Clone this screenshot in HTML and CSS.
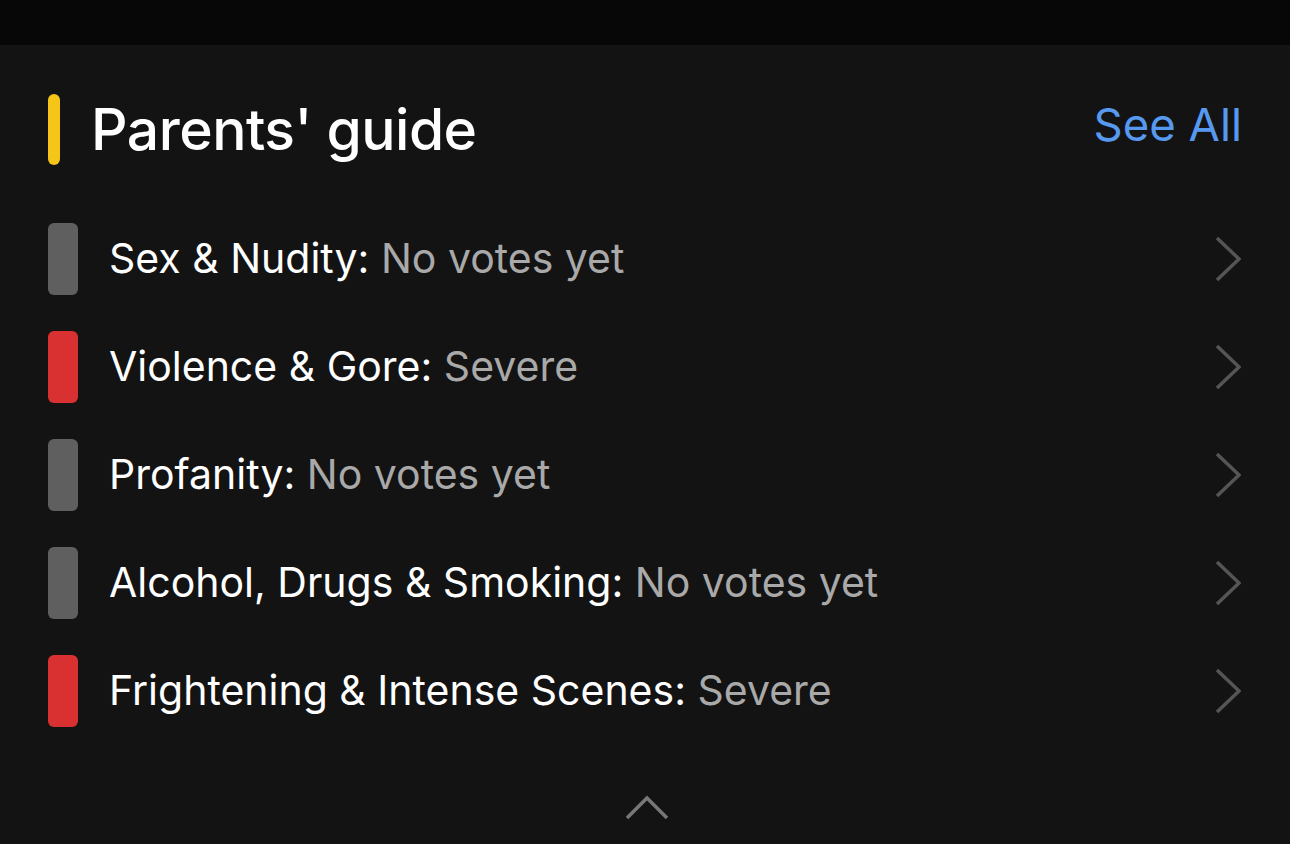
FILE: index.html
```html
<!DOCTYPE html>
<html>
<head>
<meta charset="utf-8">
<link rel="stylesheet" href="styles.css">
</head>
<body>
<div class="topbar"></div>
<section class="guide">
  <header class="guide-head">
    <div class="head-left">
      <span class="accent"></span>
      <h1 class="title">Parents' guide</h1>
    </div>
    <a class="see-all">See All</a>
  </header>
  <ul class="rows">
    <li class="row">
      <span class="level level-none"></span>
      <span class="label">Sex &amp; Nudity: <span class="value">No votes yet</span></span>
      <svg class="chev" viewBox="0 0 26 46" width="26" height="46"><path d="M2 2 L24 23 L2 44" fill="none" stroke="#555" stroke-width="3.5"/></svg>
    </li>
    <li class="row">
      <span class="level level-severe"></span>
      <span class="label">Violence &amp; Gore: <span class="value">Severe</span></span>
      <svg class="chev" viewBox="0 0 26 46" width="26" height="46"><path d="M2 2 L24 23 L2 44" fill="none" stroke="#555" stroke-width="3.5"/></svg>
    </li>
    <li class="row">
      <span class="level level-none"></span>
      <span class="label">Profanity: <span class="value">No votes yet</span></span>
      <svg class="chev" viewBox="0 0 26 46" width="26" height="46"><path d="M2 2 L24 23 L2 44" fill="none" stroke="#555" stroke-width="3.5"/></svg>
    </li>
    <li class="row">
      <span class="level level-none"></span>
      <span class="label">Alcohol, Drugs &amp; Smoking: <span class="value">No votes yet</span></span>
      <svg class="chev" viewBox="0 0 26 46" width="26" height="46"><path d="M2 2 L24 23 L2 44" fill="none" stroke="#555" stroke-width="3.5"/></svg>
    </li>
    <li class="row">
      <span class="level level-severe"></span>
      <span class="label">Frightening &amp; Intense Scenes: <span class="value">Severe</span></span>
      <svg class="chev" viewBox="0 0 26 46" width="26" height="46"><path d="M2 2 L24 23 L2 44" fill="none" stroke="#555" stroke-width="3.5"/></svg>
    </li>
  </ul>
  <div class="collapse">
    <svg viewBox="0 0 44 26" width="44" height="26"><path d="M2 23 L22 3 L42 23" fill="none" stroke="#777" stroke-width="3.5"/></svg>
  </div>
</section>
</body>
</html>
```

FILE: styles.css
```css
html, body {
  margin: 0;
  padding: 0;
  background: #131313;
  font-family: Inter, "Noto Sans", sans-serif;
  color: #ffffff;
  height: 844px;
  overflow: hidden;
}
.topbar {
  height: 45px;
  background: #070707;
}
.guide {
  padding: 49px 48px 0 48px;
}
.guide-head {
  display: flex;
  align-items: center;
  justify-content: space-between;
  height: 71px;
}
.head-left {
  display: flex;
  align-items: center;
  gap: 31px;
}
.accent {
  width: 12px;
  height: 71px;
  border-radius: 6px;
  background: #f5c518;
}
.title {
  margin: 0;
  font-size: 57px;
  font-weight: 500;
  letter-spacing: -0.5px;
}
.see-all {
  color: #5799ef;
  font-size: 45.5px;
  font-weight: 400;
  margin-top: -10px;
}
.rows {
  list-style: none;
  margin: 40px 0 0 0;
  padding: 0;
}
.row {
  display: flex;
  align-items: center;
  height: 108px;
}
.level {
  width: 30px;
  height: 72px;
  border-radius: 6px;
  flex: none;
}
.level-none { background: #5f5f5f; }
.level-severe { background: #d93131; }
.label {
  margin-left: 31px;
  font-size: 41px;
  flex: 1;
  margin-top: -2px;
}
.value {
  color: #a9a9a9;
}
.chev {
  flex: none;
  margin-right: 1px;
}
.collapse {
  display: flex;
  justify-content: center;
  padding-top: 50px;
  padding-left: 4px;
}
```
